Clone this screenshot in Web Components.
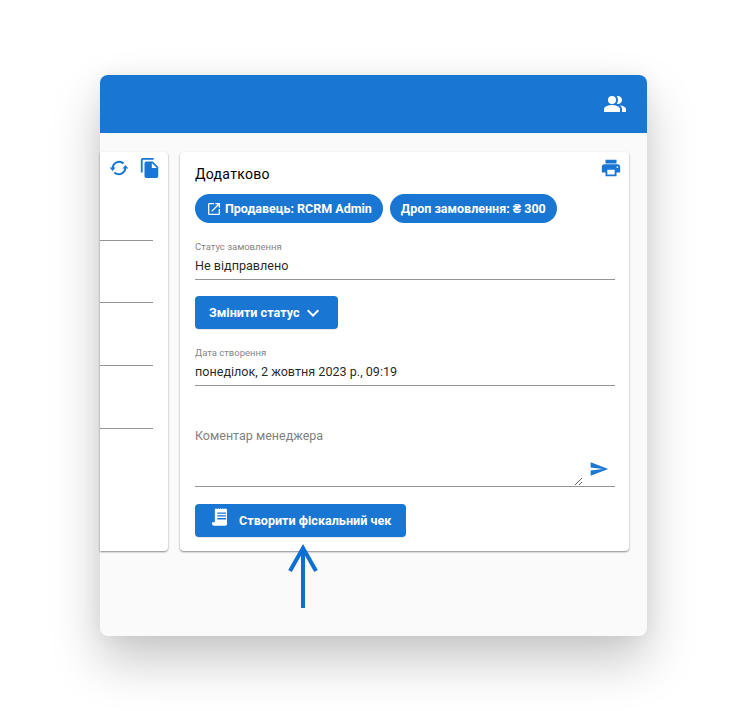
<!DOCTYPE html>
<html lang="uk">
<head>
<meta charset="utf-8">
<title>Додатково</title>
<style>
  html, body { margin: 0; background: #fff; }
  body {
    font-family: Roboto, "Liberation Sans", sans-serif;
    color: rgba(0, 0, 0, .87);
    overflow: hidden;
    height: 711px;
  }
</style>
</head>
<body>
<app-window>
  <side-card></side-card>
  <extra-card>
    <span slot="title">Додатково</span>
    <div slot="chips">
      <pill-button icon="open">Продавець: RCRM Admin</pill-button>
      <pill-button>Дроп замовлення: ₴ 300</pill-button>
    </div>
    <read-field label="Статус замовлення">Не відправлено</read-field>
    <action-button icon="chevron">Змінити статус</action-button>
    <read-field label="Дата створення">понеділок, 2 жовтня 2023 р., 09:19</read-field>
    <comment-field label="Коментар менеджера"></comment-field>
    <action-button icon="receipt">Створити фіскальний чек</action-button>
  </extra-card>
</app-window>

<script>
const ICONS = {
  people: `<svg width="24" height="24" viewBox="0 0 24 24" fill="#fff"><path d="M16.670 13.130C18.040 14.060 19 15.320 19 17v3h4v-3c0-2.180-3.570-3.470-6.330-3.870z"/><circle cx="9" cy="8" r="4"/><path d="M15 12c2.210 0 4-1.790 4-4s-1.790-4-4-4c-.47 0-.91.1-1.330.24C14.500 5.270 15 6.580 15 8s-.5 2.730-1.330 3.760c.42.14.86.24 1.330.24z"/><path d="M9 13c-2.670 0-8 1.340-8 4v3h16v-3c0-2.660-5.330-4-8-4z"/></svg>`,
  sync: `<svg width="22" height="22" viewBox="0 0 24 24" fill="none" stroke="#1976d2" stroke-width="2.200"><path d="M5.200 12.500A7 7 0 0 1 17 7.200"/><path d="M18.800 11.500A7 7 0 0 1 7 16.800"/><path d="M1.800 11.500h6.400l-3.200 3.700z" fill="#1976d2" stroke="none"/><path d="M15.800 12.500h6.400L19 8.800z" fill="#1976d2" stroke="none"/></svg>`,
  copy: `<svg width="22" height="22" viewBox="0 0 24 24" fill="#1976d2"><path d="M16 1H4a2 2 0 0 0-2 2v14h2V3h12z"/><path d="M15 5H8a2 2 0 0 0-2 2v14a2 2 0 0 0 2 2h11a2 2 0 0 0 2-2V11zm-1 7V6.500l5.500 5.500z"/></svg>`,
  print: `<svg width="22" height="22" viewBox="0 0 24 24" fill="#1976d2"><path d="M19 8H5a3 3 0 0 0-3 3v6h4v4h12v-4h4v-6a3 3 0 0 0-3-3zm-3 11H8v-5h8zm3-7a1 1 0 1 1 0-2 1 1 0 0 1 0 2zM18 3H6v4h12z"/></svg>`,
  open: `<svg width="16" height="16" viewBox="0 0 24 24" fill="#fff"><path d="M19 19H5V5h7V3H5a2 2 0 0 0-2 2v14a2 2 0 0 0 2 2h14a2 2 0 0 0 2-2v-7h-2zM14 3v2h3.590l-9.830 9.830 1.410 1.410L19 6.410V10h2V3z"/></svg>`,
  chevron: `<svg width="24" height="24" viewBox="0 0 24 24" fill="#fff"><path d="M7.410 8.590 12 13.170l4.590-4.580L18 10l-6 6-6-6z"/></svg>`,
  send: `<svg width="20" height="18" viewBox="0 0 24 24" preserveAspectRatio="none" fill="#1976d2"><path d="M2.010 21 23 12 2.010 3 2 10l15 2-15 2z"/></svg>`,
  receipt: `<svg width="17" height="19" viewBox="0 0 18 20" fill="#fff"><path fill-rule="evenodd" d="M3 1.200 4.200.2l1.200 1 1.200-1 1.200 1 1.200-1 1.200 1 1.200-1 1.200 1 1.200-1 1.200 1 .9-.7V17c0 1-.7 1.800-1.700 1.800H2.300C1 18.800 0 17.900 0 16.700V15h3zM5.600 4.600v1.400h9.400V4.600zm0 3v1.400h9.400V7.600zm0 3v1.400h9.400v-1.400z"/></svg>`
};

class AppWindow extends HTMLElement {
  constructor() {
    super();
    this.attachShadow({ mode: "open" });
    this.shadowRoot.innerHTML = `
      <style>
        :host { display: block; padding: 75px 100px 0; }
        .window {
          position: relative;
          height: 561px;
          display: flex;
          flex-direction: column;
          background: #fafafa;
          border-radius: 8px;
          box-shadow: 0 25px 50px rgba(0, 0, 0, .22), 0 0 20px rgba(0, 0, 0, .05);
        }
        header {
          height: 58px;
          flex: none;
          background: #1976d2;
          border-radius: 8px 8px 0 0;
          display: flex;
          align-items: center;
          justify-content: flex-end;
          padding-right: 20px;
        }
        header span { display: flex; }
        main {
          flex: none;
          display: flex;
          gap: 12px;
          padding: 19px 18px 0 0;
        }
        .arrow { position: absolute; left: 187px; top: 468px; display: block; }
      </style>
      <div class="window">
        <header><span>${ICONS.people}</span></header>
        <main><slot></slot></main>
        <svg class="arrow" width="32" height="68" viewBox="0 0 32 68" fill="none" stroke="#0b6fd4" stroke-width="4"><path d="M16 65V5"/><path d="M3 28 16 5l13 23"/></svg>
      </div>
    `;
  }
}

class SideCard extends HTMLElement {
  constructor() {
    super();
    this.attachShadow({ mode: "open" });
    this.shadowRoot.innerHTML = `
      <style>
        :host {
          display: block;
          flex: none;
          width: 68px;
          height: 399px;
          box-sizing: border-box;
          background: #fff;
          border-radius: 0 4px 4px 0;
          box-shadow: 0 1px 2px rgba(0, 0, 0, .45);
        }
        .tools {
          display: flex;
          justify-content: flex-end;
          align-items: center;
          gap: 9px;
          height: 22px;
          padding: 5px 7px 0 0;
        }
        .tools span { display: flex; }
        .lines { display: flex; flex-direction: column; margin: 60.600px 15px 0 0; }
        .lines i { display: block; height: 1px; background: #949494; margin-bottom: 61.800px; }
      </style>
      <div class="tools">
        <span>${ICONS.sync}</span>
        <span>${ICONS.copy}</span>
      </div>
      <div class="lines"><i></i><i></i><i></i><i></i></div>
    `;
  }
}

class ExtraCard extends HTMLElement {
  constructor() {
    super();
    this.attachShadow({ mode: "open" });
    this.shadowRoot.innerHTML = `
      <style>
        :host {
          display: block;
          flex: 1;
          position: relative;
          box-sizing: border-box;
          height: 399px;
          padding: 12px 14px 0 15px;
          background: #fff;
          border-radius: 4px;
          box-shadow: 0 1px 2px rgba(0, 0, 0, .45);
          font-size: 14px;
        }
        .print { position: absolute; top: 5px; right: 7px; display: flex; }
        .title { font-size: 14px; font-weight: 400; line-height: 20px; height: 30px; letter-spacing: .3px; color: #000; }
        ::slotted([slot="chips"]) { display: flex; gap: 7px; margin-bottom: 17px; }
      </style>
      <span class="print">${ICONS.print}</span>
      <div class="title"><slot name="title"></slot></div>
      <slot name="chips"></slot>
      <slot></slot>
    `;
  }
}

class PillButton extends HTMLElement {
  constructor() {
    super();
    this.attachShadow({ mode: "open" });
    const icon = this.getAttribute("icon");
    this.shadowRoot.innerHTML = `
      <style>
        :host {
          display: inline-flex;
          align-items: center;
          gap: 3px;
          height: 29px;
          box-sizing: border-box;
          padding: 0 11px;
          border-radius: 15px;
          background: #1976d2;
          color: #fff;
          font-size: 12.5px;
          font-weight: 700;
          white-space: nowrap;
        }
        span { display: flex; }
      </style>
      ${icon ? `<span>${ICONS[icon]}</span>` : ""}<slot></slot>
    `;
  }
}

class ActionButton extends HTMLElement {
  constructor() {
    super();
    this.attachShadow({ mode: "open" });
    const icon = this.getAttribute("icon");
    const wide = icon === "receipt";
    this.shadowRoot.innerHTML = `
      <style>
        :host {
          display: flex;
          width: fit-content;
          align-items: center;
          flex-direction: ${wide ? "row" : "row-reverse"};
          gap: ${wide ? "10px" : "2px"};
          height: 33px;
          box-sizing: border-box;
          padding: ${wide ? "0 15px 0 17px" : "0 13px 0 14px"};
          margin-bottom: ${wide ? "0" : "17px"};
          border-radius: 4px;
          background: #1976d2;
          color: #fff;
          font-size: 12.6px;
          font-weight: 700;
          white-space: nowrap;
          box-shadow: 0 1px 1px rgba(0, 0, 0, .1);
        }
        span { display: flex; margin-bottom: ${wide ? "6px" : "0"}; }
      </style>
      <span>${ICONS[icon]}</span><div><slot></slot></div>
    `;
  }
}

class ReadField extends HTMLElement {
  constructor() {
    super();
    this.attachShadow({ mode: "open" });
    this.shadowRoot.innerHTML = `
      <style>
        :host {
          display: block;
          height: 39px;
          margin-bottom: 16px;
          border-bottom: 1px solid #949494;
        }
        label { display: block; font-size: 9.5px; line-height: 12px; color: #858585; padding-top: 1px; }
        div { font-size: 12.6px; line-height: 20px; margin-top: 3px; color: rgba(0, 0, 0, .87); }
      </style>
      <label>${this.getAttribute("label")}</label>
      <div><slot></slot></div>
    `;
  }
}

class CommentField extends HTMLElement {
  constructor() {
    super();
    this.attachShadow({ mode: "open" });
    this.shadowRoot.innerHTML = `
      <style>
        :host {
          display: flex;
          align-items: flex-end;
          height: 65px;
          margin: 35px 0 17px;
          border-bottom: 1px solid #949494;
          position: relative;
        }
        label {
          position: absolute;
          left: 0;
          top: 7px;
          font-size: 12.5px;
          line-height: 16px;
          color: #808080;
        }
        textarea {
          flex: 1;
          display: block;
          height: 30px;
          min-width: 0;
          margin: 0;
          padding: 0;
          border: 0;
          outline: 0;
          background: transparent;
          font: inherit;
        }
        span { display: flex; margin: 0 6px 8px 6px; }
      </style>
      <label>${this.getAttribute("label")}</label>
      <textarea></textarea>
      <span>${ICONS.send}</span>
    `;
  }
}

customElements.define("app-window", AppWindow);
customElements.define("side-card", SideCard);
customElements.define("extra-card", ExtraCard);
customElements.define("pill-button", PillButton);
customElements.define("action-button", ActionButton);
customElements.define("read-field", ReadField);
customElements.define("comment-field", CommentField);
</script>
</body>
</html>
